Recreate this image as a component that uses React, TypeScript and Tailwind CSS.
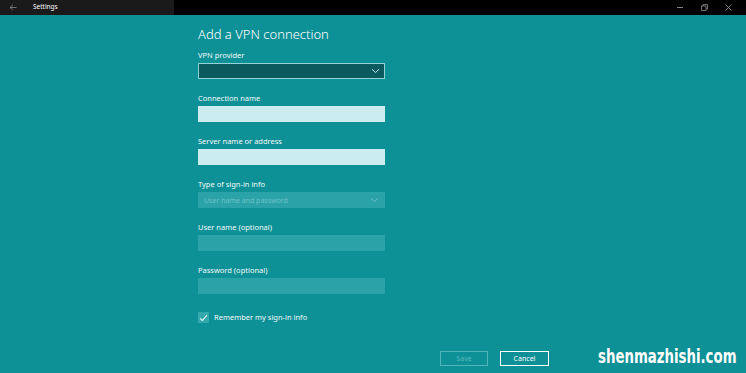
import React from "react";

const font = { fontFamily: '"Noto Sans", "Open Sans", sans-serif' };

function Label({ children }: { children: React.ReactNode }) {
  return <div className="text-[7.5px] leading-[10px] text-[#f2fafa] h-[10px]">{children}</div>;
}

function Chevron({ color }: { color: string }) {
  return (
    <svg width="9" height="6" viewBox="0 0 9 6" fill="none">
      <path d="M1 1.2 L4.5 4.6 L8 1.2" stroke={color} strokeWidth="1" />
    </svg>
  );
}

export default function App() {
  return (
    <div className="w-[746px] h-[373px] bg-[#0d9096] flex flex-col relative overflow-hidden" style={font}>
      {/* title bar */}
      <div className="h-[15px] flex bg-black shrink-0">
        <div className="w-[174px] bg-[#1a1a1a] flex items-center">
          <svg width="8" height="7" viewBox="0 0 8 7" className="ml-[9px]" fill="none">
            <path d="M4 0.8 L1 3.5 L4 6.2 M1 3.5 H7.5" stroke="#8a8a8a" strokeWidth="0.8" />
          </svg>
          <span className="ml-[16px] text-[6.5px] text-white leading-none">Settings</span>
        </div>
        <div className="flex-1" />
        <div className="flex items-center gap-0 pr-[6px]">
          <div className="w-[24px] flex justify-center">
            <div className="w-[6px] h-[1px] bg-[#8a8a8a]" />
          </div>
          <div className="w-[24px] flex justify-center">
            <svg width="7" height="7" viewBox="0 0 7 7" fill="none">
              <rect x="0.5" y="2" width="4.5" height="4.5" stroke="#8a8a8a" strokeWidth="0.8" />
              <path d="M2 2 V0.5 H6.5 V5 H5" stroke="#8a8a8a" strokeWidth="0.8" />
            </svg>
          </div>
          <div className="w-[24px] flex justify-center">
            <svg width="7" height="7" viewBox="0 0 7 7" fill="none">
              <path d="M0.5 0.5 L6.5 6.5 M6.5 0.5 L0.5 6.5" stroke="#8a8a8a" strokeWidth="0.8" />
            </svg>
          </div>
        </div>
      </div>

      {/* content */}
      <div className="flex flex-col pl-[198px]">
        <div className="mt-[11px] text-[13px] leading-[17px] text-white font-light">Add a VPN connection</div>

        <div className="mt-[7px]"><Label>VPN provider</Label></div>
        <div className="mt-[3px] w-[187px] h-[16px] bg-[#0a5a5e] border border-[#8fd3d6] flex items-center justify-end pr-[4px]">
          <Chevron color="#bfe6e8" />
        </div>

        <div className="mt-[14px]"><Label>Connection name</Label></div>
        <div className="mt-[3px] w-[187px] h-[16px] bg-[#ccedef]" />

        <div className="mt-[14px]"><Label>Server name or address</Label></div>
        <div className="mt-[3px] w-[187px] h-[16px] bg-[#ccedef]" />

        <div className="mt-[14px]"><Label>Type of sign-in info</Label></div>
        <div className="mt-[3px] w-[187px] h-[16px] bg-[#2aa2a7] flex items-center justify-between px-[6px]">
          <span className="text-[7px] text-[#6cc3c7] leading-none">User name and password</span>
          <Chevron color="#6cc3c7" />
        </div>

        <div className="mt-[14px]"><Label>User name (optional)</Label></div>
        <div className="mt-[3px] w-[187px] h-[16px] bg-[#2aa2a7]" />

        <div className="mt-[14px]"><Label>Password (optional)</Label></div>
        <div className="mt-[3px] w-[187px] h-[16px] bg-[#2aa2a7]" />

        <div className="mt-[18px] flex items-center">
          <div className="w-[11px] h-[11px] bg-[#33a8ad] flex items-center justify-center">
            <svg width="9" height="8" viewBox="0 0 9 8" fill="none">
              <path d="M1 4.3 L3.3 6.5 L8 1.2" stroke="#e6f7f8" strokeWidth="1.1" />
            </svg>
          </div>
          <span className="ml-[5px] text-[7.5px] text-[#f2fafa] leading-none">Remember my sign-in info</span>
        </div>

        <div className="mt-[28px] flex pl-[242px] gap-[12px]">
          <div className="w-[48px] h-[15px] border border-[#4fb6ba] flex items-center justify-center text-[7px] text-[#56b9bd] leading-none">Save</div>
          <div className="w-[49px] h-[15px] border-[1.5px] border-white flex items-center justify-center text-[7px] text-white leading-none">Cancel</div>
        </div>
      </div>

      <div
        className="absolute left-[598px] top-[346px] text-white text-[20px] font-bold leading-none origin-left scale-x-[0.74] whitespace-nowrap"
        style={{ fontFamily: '"DejaVu Sans Condensed", "Liberation Sans", sans-serif' }}
      >
        shenmazhishi.com
      </div>
    </div>
  );
}
